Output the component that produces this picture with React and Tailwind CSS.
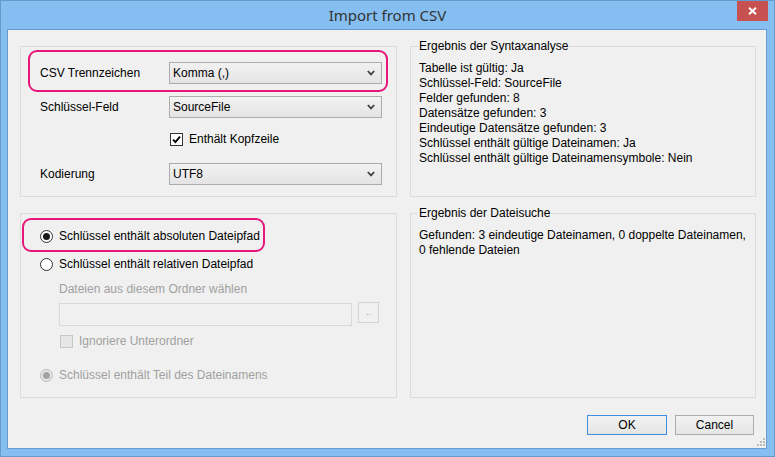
import React from "react";

function Chevron({ color = "#404040" }) {
  return (
    <svg width="8" height="6" viewBox="0 0 8 6" className="shrink-0">
      <path d="M0.8 1 L4 4.4 L7.2 1" fill="none" stroke={color} strokeWidth="1.8" />
    </svg>
  );
}

function Combo({ value }) {
  return (
    <div className="flex h-[22px] w-[213px] items-center justify-between border border-[#acacac] bg-linear-to-b from-[#f2f2f2] to-[#e4e4e4] pl-[3px] pr-[6px]">
      <span className="leading-[15px]">{value}</span>
      <Chevron />
    </div>
  );
}

function Check({ checked, disabled }) {
  return (
    <div
      className={
        disabled
          ? "h-[13px] w-[13px] shrink-0 border border-[#c6c6c6] bg-[#e6e6e6]"
          : "flex h-[13px] w-[13px] shrink-0 items-center justify-center border border-[#333333] bg-white"
      }
    >
      {checked && (
        <svg width="9" height="9" viewBox="0 0 9 9">
          <path d="M1 4.6 L3.4 7 L8 1.6" fill="none" stroke="#000" strokeWidth="1.9" />
        </svg>
      )}
    </div>
  );
}

function Radio({ checked, disabled }) {
  return (
    <div
      className={
        disabled
          ? "flex h-[13px] w-[13px] shrink-0 items-center justify-center rounded-full border border-[#bcbcbc] bg-[#e6e6e6]"
          : "flex h-[13px] w-[13px] shrink-0 items-center justify-center rounded-full border border-[#333333] bg-white"
      }
    >
      {checked && (
        <div
          className={
            disabled
              ? "h-[7px] w-[7px] rounded-full bg-[#a3a3a3]"
              : "h-[7px] w-[7px] rounded-full bg-[#1a1a1a]"
          }
        />
      )}
    </div>
  );
}

function Legend({ children }) {
  return (
    <span className="absolute -top-[8px] left-[7px] bg-[#f0f0f0] px-[1px] leading-[15px]">
      {children}
    </span>
  );
}

export default function App() {
  return (
    <div className="flex h-[457px] w-[775px] flex-col border border-[#6699cc] bg-[#85bff1] font-['Liberation_Sans',Arial,sans-serif] text-[12px] text-black">
      {/* title bar */}
      <div className="relative flex h-[28px] shrink-0 items-center justify-center">
        <span className="text-[15px] leading-[18px] text-[#333333] font-['Noto_Sans',sans-serif]">Import from CSV</span>
        <div className="absolute right-[6px] top-0 flex h-[20px] w-[31px] items-center justify-center bg-[#c75050]">
          <svg width="9" height="8" viewBox="0 0 9 8">
            <path d="M1 0.8 L8 7.2 M8 0.8 L1 7.2" stroke="#fff" strokeWidth="2" />
          </svg>
        </div>
      </div>

      {/* content */}
      <div className="flex flex-1 pl-[6px] pr-[7px] pb-[7px]">
        <div className="relative flex flex-1 flex-col border border-[#6a9bd0] bg-[#f0f0f0] pl-[12px] pr-[10px] pt-[16px]">
          <div className="grid grid-cols-[377px_346px] grid-rows-[151px_185px] gap-x-[13px] gap-y-[16px]">
            {/* top left group */}
            <div className="flex flex-col border border-[#dcdcdc]">
              <div className="ml-[7px] mt-[3px] flex h-[42px] w-[360px] items-start rounded-[9px] border-2 border-[#e6177a] pl-[10px] pt-[10px]">
                <span className="w-[129px] leading-[22px]">CSV Trennzeichen</span>
                <Combo value="Komma (,)" />
              </div>
              <div className="mt-[4px] flex items-center pl-[19px]">
                <span className="w-[129px]">Schlüssel-Feld</span>
                <Combo value="SourceFile" />
              </div>
              <div className="mt-[14px] flex h-[15px] items-center pl-[149px]">
                <Check checked />
                <span className="ml-[6px] leading-[15px]">Enthält Kopfzeile</span>
              </div>
              <div className="mt-[16px] flex items-center pl-[19px]">
                <span className="w-[129px]">Kodierung</span>
                <Combo value="UTF8" />
              </div>
            </div>

            {/* top right group */}
            <div className="relative border border-[#dcdcdc] pl-[8px] pt-[14px] leading-[15px]">
              <Legend>Ergebnis der Syntaxanalyse</Legend>
              <div>Tabelle ist gültig: Ja</div>
              <div>Schlüssel-Feld: SourceFile</div>
              <div>Felder gefunden: 8</div>
              <div>Datensätze gefunden: 3</div>
              <div>Eindeutige Datensätze gefunden: 3</div>
              <div>Schlüssel enthält gültige Dateinamen: Ja</div>
              <div>Schlüssel enthält gültige Dateinamensymbole: Nein</div>
            </div>

            {/* bottom left group */}
            <div className="flex flex-col border border-[#dcdcdc] leading-[15px]">
              <div className="ml-[1px] mt-[4px] flex h-[34px] w-[243px] items-center rounded-[9px] border-2 border-[#e6177a] pb-[1px] pl-[16px] pt-[3px]">
                <Radio checked />
                <span className="ml-[6px]">Schlüssel enthält absoluten Dateipfad</span>
              </div>
              <div className="mt-[5px] flex h-[15px] items-center pl-[19px]">
                <Radio />
                <span className="ml-[6px]">Schlüssel enthält relativen Dateipfad</span>
              </div>
              <div className="mt-[10px] h-[15px] pl-[38px] text-[#a0a0a0]">
                Dateien aus diesem Ordner wählen
              </div>
              <div className="mt-[6px] flex items-start pl-[38px]">
                <div className="h-[23px] w-[293px] border border-[#d9d9d9] bg-[#f0f0f0]" />
                <div className="-mt-[1px] ml-[6px] flex h-[21px] w-[21px] items-center justify-center border border-[#d4d4d4] text-[9px] leading-[9px] text-[#9a9a9a]">
                  ..
                </div>
              </div>
              <div className="mt-[8px] flex h-[14px] items-center pl-[39px]">
                <Check disabled />
                <span className="ml-[6px] text-[#a0a0a0]">Ignoriere Unterordner</span>
              </div>
              <div className="mt-[20px] flex h-[15px] items-center pl-[19px]">
                <Radio checked disabled />
                <span className="ml-[6px] text-[#a0a0a0]">Schlüssel enthält Teil des Dateinamens</span>
              </div>
            </div>

            {/* bottom right group */}
            <div className="relative border border-[#dcdcdc] pl-[8px] pt-[14px] leading-[15px]">
              <Legend>Ergebnis der Dateisuche</Legend>
              <div className="whitespace-nowrap">
                Gefunden: 3 eindeutige Dateinamen, 0 doppelte Dateinamen,
                <br />0 fehlende Dateien
              </div>
            </div>
          </div>

          {/* buttons */}
          <div className="mt-[17px] flex justify-end gap-[8px] pr-[2px]">
            <div className="flex h-[20px] w-[80px] items-center justify-center border border-[#3c8fe0] bg-linear-to-b from-[#f2f2f2] to-[#e5e5e5]">
              OK
            </div>
            <div className="flex h-[20px] w-[79px] items-center justify-center border border-[#acacac] bg-linear-to-b from-[#f2f2f2] to-[#e5e5e5]">
              Cancel
            </div>
          </div>

          {/* resize grip */}
          <svg width="8" height="8" viewBox="0 0 8 8" className="absolute bottom-[2px] right-[1px]">
            <rect x="6" y="0" width="2" height="2" fill="#bdbdbd" />
            <rect x="3" y="3" width="2" height="2" fill="#bdbdbd" />
            <rect x="6" y="3" width="2" height="2" fill="#bdbdbd" />
            <rect x="0" y="6" width="2" height="2" fill="#bdbdbd" />
            <rect x="3" y="6" width="2" height="2" fill="#bdbdbd" />
            <rect x="6" y="6" width="2" height="2" fill="#bdbdbd" />
          </svg>
        </div>
      </div>
    </div>
  );
}
